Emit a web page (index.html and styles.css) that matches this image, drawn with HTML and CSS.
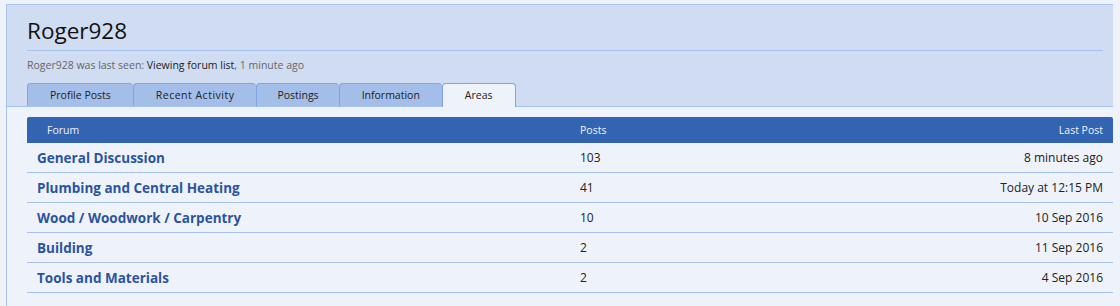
FILE: index.html
```html
<!DOCTYPE html>
<html lang="en">
<head>
    <meta charset="UTF-8">
    <title>Roger928 - Areas</title>
    <link rel="stylesheet" href="styles.css">
</head>
<body>
    <div class="profile">
        <div class="profile-head">
            <h1>Roger928</h1>
            <p class="last-seen">Roger928 was last seen: <span class="activity">Viewing forum list</span>, 1 minute ago</p>
            <ul class="tabs">
                <li>Profile Posts</li>
                <li class="wide">Recent Activity</li>
                <li class="narrow">Postings</li>
                <li>Information</li>
                <li class="active">Areas</li>
            </ul>
        </div>

        <div class="profile-body">
            <div class="areas">
                <div class="areas-head">
                    <span class="col-forum">Forum</span>
                    <span class="col-posts">Posts</span>
                    <span class="col-last">Last Post</span>
                </div>
                <div class="area-row">
                    <a class="col-forum" href="#">General Discussion</a>
                    <span class="col-posts">103</span>
                    <span class="col-last">8 minutes ago</span>
                </div>
                <div class="area-row">
                    <a class="col-forum" href="#">Plumbing and Central Heating</a>
                    <span class="col-posts">41</span>
                    <span class="col-last">Today at 12:15 PM</span>
                </div>
                <div class="area-row">
                    <a class="col-forum" href="#">Wood / Woodwork / Carpentry</a>
                    <span class="col-posts">10</span>
                    <span class="col-last">10 Sep 2016</span>
                </div>
                <div class="area-row">
                    <a class="col-forum" href="#">Building</a>
                    <span class="col-posts">2</span>
                    <span class="col-last">11 Sep 2016</span>
                </div>
                <div class="area-row">
                    <a class="col-forum" href="#">Tools and Materials</a>
                    <span class="col-posts">2</span>
                    <span class="col-last">4 Sep 2016</span>
                </div>
            </div>
        </div>
    </div>
</body>
</html>
```

FILE: styles.css
```css
body {
    font-family: "Open Sans", "Liberation Sans", Arial, sans-serif;
    color: #222;
    margin: 0;
    background-color: #eef3fb;
}
.profile {
    margin: 4px 7px 0 6px;
    border-left: 1px solid #a5c3ec;
    min-height: 302px;
}
.profile-head {
    background-color: #d0dcf2;
    border-top: 1px solid #a5c3ec;
    border-bottom: 1px solid #a5c3ec;
    padding: 0 10px 0 20px;
}
h1 {
    margin: 0;
    padding: 11px 0 4px;
    font-size: 22.5px;
    font-weight: normal;
    line-height: 30px;
    color: #111;
    border-bottom: 1px solid #a5c3ec;
}
.last-seen {
    margin: 6px 0 10px;
    font-size: 10.5px;
    line-height: 16px;
    color: #666;
}
.activity {
    color: #222;
}
.tabs {
    display: flex;
    list-style: none;
    margin: 0;
    padding: 0;
}
.tabs li {
    height: 22px;
    line-height: 22px;
    padding: 0 22px;
    font-size: 10.5px;
    background-color: #a3bee8;
    border: 1px solid #7fa6e0;
    border-bottom: none;
    border-right: none;
    border-radius: 4px 4px 0 0;
}
.tabs li.wide {
    letter-spacing: 0.5px;
}
.tabs li.narrow {
    padding: 0 20px;
}
.tabs li:last-child {
    border-right: 1px solid #7fa6e0;
}
.tabs li.active {
    background-color: #eef3fb;
    height: 23px;
    margin-bottom: -1px;
}
.profile-body {
    padding: 10px 0 0 20px;
}
.areas-head,
.area-row {
    display: grid;
    grid-template-columns: 553px 200px 1fr;
    align-items: center;
}
.areas-head {
    height: 26px;
    background-color: #3264b2;
    color: #eef3fb;
    font-size: 10.5px;
    border-radius: 2px 2px 0 0;
}
.areas-head .col-forum {
    padding-left: 20px;
}
.area-row {
    height: 29px;
    border-bottom: 1px solid #a5c3ec;
    font-size: 12px;
}
.area-row .col-forum {
    padding-left: 10px;
    font-size: 13.5px;
    font-weight: bold;
    color: #2c539e;
    text-decoration: none;
}
.col-last {
    text-align: right;
    padding-right: 10px;
}
```
